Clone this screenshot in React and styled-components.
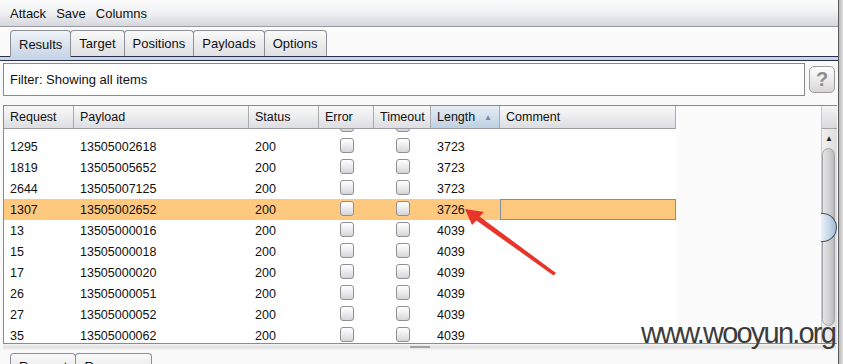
import React from 'react'
import styled, { createGlobalStyle } from 'styled-components'

const GlobalStyle = createGlobalStyle`
  html, body {
    margin: 0;
    padding: 0;
  }
  body {
    font-family: 'Liberation Sans', Arial, sans-serif;
    background: #f9f9f9;
    color: #000;
    overflow: hidden;
  }
`

const Root = styled.div`
  position: relative;
  display: flex;
  width: 843px;
  height: 364px;
  overflow: hidden;
`

const Window = styled.div`
  width: 838px;
  display: flex;
  flex-direction: column;
  overflow: hidden;
  background: #f9f9f9;
`

const Edge = styled.div`
  flex: 1;
  border-left: 1px solid #5c5c5c;
  background: linear-gradient(to right, #b9b9b9, #dedede);
`

const MenuBar = styled.div`
  flex-shrink: 0;
  height: 26px;
  display: flex;
  align-items: center;
  gap: 10px;
  padding-left: 10px;
  border-bottom: 1px solid #9a9ba1;
  background: linear-gradient(#fbfbfc, #f1f2f4 45%, #d5d7de);
  font-size: 13px;
  color: #111;
`

const TabStrip = styled.div`
  flex-shrink: 0;
  height: 29px;
  display: flex;
  align-items: flex-end;
  padding-left: ${p => p.$inset || 10}px;
  background: #fbfbfb;
`

const Tab = styled.div`
  position: relative;
  z-index: ${p => (p.$active ? 1 : 0)};
  flex-shrink: 0;
  height: ${p => (p.$active ? 27 : 26)}px;
  margin-bottom: ${p => (p.$active ? -1 : 0)}px;
  margin-right: -1px;
  padding: 0 8px;
  box-sizing: border-box;
  display: flex;
  align-items: center;
  font-size: 13px;
  color: #111;
  border: 1px solid #8d8f96;
  border-bottom: none;
  border-radius: 4px 4px 0 0;
  background: ${p =>
    p.$active
      ? 'linear-gradient(#eef3f8, #dbe5ef 50%, #c7d5e6)'
      : 'linear-gradient(#fafafa, #ececee 50%, #e0e1e4)'};
`

const TabRule = styled.div`
  flex-shrink: 0;
  height: 3px;
  border-top: 1px solid #27314b;
  border-bottom: 1px solid #27314b;
  background: #c7d5e6;
`

const Content = styled.div`
  flex: 1;
  min-height: 0;
  display: flex;
  flex-direction: column;
  padding: 0 2px 0 3px;
`

const FilterRow = styled.div`
  flex-shrink: 0;
  display: flex;
  align-items: center;
  gap: 4px;
  margin-top: 2px;
  padding-right: 1px;
`

const FilterBox = styled.div`
  flex: 1;
  height: 33px;
  box-sizing: border-box;
  display: flex;
  align-items: center;
  padding-left: 6px;
  border: 1px solid #8a8a8a;
  background: #fefefe;
  font-size: 13px;
  color: #111;
`

const HelpButton = styled.div`
  width: 26px;
  height: 27px;
  box-sizing: border-box;
  display: flex;
  align-items: center;
  justify-content: center;
  border: 1px solid #9c9c9c;
  border-radius: 5px;
  background: linear-gradient(#fdfdfd, #e9e9e9 55%, #d6d6d6);
  font-size: 20px;
  font-weight: bold;
  color: #8e8e8e;
`

const TableFrame = styled.div`
  flex-shrink: 0;
  display: flex;
  margin-top: 9px;
  margin-right: -1px;
  border: 1px solid #8b8b8b;
  border-right: none;
`

const TableMain = styled.div`
  flex: 1;
  display: flex;
  flex-direction: column;
  background: #fbfbfb;
`

const HeaderRow = styled.div`
  display: flex;
  height: 23px;
`

const HeaderCell = styled.div`
  width: ${p => p.$w}px;
  box-sizing: border-box;
  display: flex;
  align-items: center;
  justify-content: space-between;
  padding: 0 7px 0 6px;
  border-right: 1px solid #a9abb0;
  border-bottom: 1px solid #9a9ca2;
  font-size: 12.5px;
  color: #111;
  background: ${p =>
    p.$sorted
      ? 'linear-gradient(#e4ecf4, #d3dfeb 50%, #bfd0e2)'
      : 'linear-gradient(#f8f8f9, #ececee 50%, #dcdde2)'};
`

const SortArrow = styled.span`
  font-size: 8px;
  color: #6a89b0;
`

const Body = styled.div`
  height: 214px;
  overflow: hidden;
`

const Rows = styled.div`
  margin-top: -14px;
`

const Row = styled.div`
  display: flex;
  width: 672px;
  height: 21px;
  background: ${p => (p.$hi ? '#fec87f' : '#ffffff')};
`

const Cell = styled.div`
  width: ${p => p.$w}px;
  box-sizing: border-box;
  display: flex;
  align-items: center;
  justify-content: ${p => (p.$center ? 'center' : 'flex-start')};
  padding-left: ${p => (p.$center ? 0 : 6)}px;
  font-size: 12.5px;
  color: #111;
  border: ${p => (p.$editing ? '1px solid #7e8fa3' : 'none')};
`

const CheckBox = styled.span`
  width: 14px;
  height: 15px;
  box-sizing: border-box;
  margin-top: -2px;
  border: 1px solid #8e9096;
  border-radius: 3px;
  background: linear-gradient(#ffffff, #ececec 50%, #d4d5d8);
`

const ScrollBar = styled.div`
  width: 16px;
  display: flex;
  flex-direction: column;
`

const Corner = styled.div`
  height: 23px;
  box-sizing: border-box;
  border-left: 1px solid #c8c8c8;
  border-bottom: 1px solid #a4a4a4;
  background: linear-gradient(#f3f3f3, #d9dadd);
`

const Track = styled.div`
  position: relative;
  flex: 1;
  display: flex;
  flex-direction: column;
  align-items: flex-start;
  padding-top: 2px;
  border-left: 1px solid #c8c8c8;
  background: linear-gradient(to right, #f0f0f0, #dedede);
`

const UpArrow = styled.div`
  width: 14px;
  height: 14px;
  display: flex;
  align-items: center;
  justify-content: center;
  font-size: 8px;
  color: #222;
`

const Thumb = styled.div`
  width: 13px;
  height: 178px;
  margin-top: 3px;
  box-sizing: border-box;
  border: 1px solid #a2a4a9;
  border-radius: 7px;
  background: linear-gradient(to right, #e6e6e6, #cfcfcf 60%, #b9b9b9);
`

const Knob = styled.div`
  position: absolute;
  top: 84px;
  left: -1px;
  width: 16px;
  height: 29px;
  box-sizing: border-box;
  border: 1px solid #46525f;
  border-left: none;
  border-radius: 0 15px 15px 0;
  background: linear-gradient(to right, #eaf1f8, #c3d5e7 60%, #9fb8d2);
`

const Splitter = styled.div`
  flex-shrink: 0;
  height: 6px;
  display: flex;
  align-items: center;
  justify-content: center;
  background: linear-gradient(#f6f6f6, #e0e0e0 50%, #f6f6f6);
`

const Grip = styled.div`
  width: 20px;
  height: 2px;
  background: #a2a2a2;
`

const BottomTabs = styled(TabStrip)`
  height: 24px;
  margin-top: 3px;
  background: transparent;
  align-items: flex-start;
`

const Watermark = styled.div`
  position: absolute;
  right: 8px;
  top: 319px;
  font-size: 29px;
  line-height: 29px;
  letter-spacing: -1.8px;
  color: #3c3c3c;
`

const Overlay = styled.svg`
  position: absolute;
  left: 0;
  top: 0;
  pointer-events: none;
`

const columns = [
  { key: 'req', title: 'Request', w: 70 },
  { key: 'pay', title: 'Payload', w: 175 },
  { key: 'status', title: 'Status', w: 70 },
  { key: 'err', title: 'Error', w: 55, check: true },
  { key: 'timeout', title: 'Timeout', w: 57, check: true },
  { key: 'len', title: 'Length', w: 69, sorted: true },
  { key: 'comment', title: 'Comment', w: 176 }
]

const rows = [
  { req: '', pay: '', status: '', len: '' },
  { req: '1295', pay: '13505002618', status: '200', len: '3723' },
  { req: '1819', pay: '13505005652', status: '200', len: '3723' },
  { req: '2644', pay: '13505007125', status: '200', len: '3723' },
  { req: '1307', pay: '13505002652', status: '200', len: '3726', hi: true },
  { req: '13', pay: '13505000016', status: '200', len: '4039' },
  { req: '15', pay: '13505000018', status: '200', len: '4039' },
  { req: '17', pay: '13505000020', status: '200', len: '4039' },
  { req: '26', pay: '13505000051', status: '200', len: '4039' },
  { req: '27', pay: '13505000052', status: '200', len: '4039' },
  { req: '35', pay: '13505000062', status: '200', len: '4039' }
]

const tabs = ['Results', 'Target', 'Positions', 'Payloads', 'Options']

export default function App () {
  return (
    <Root>
      <GlobalStyle />
      <Window>
        <MenuBar>
          <span>Attack</span>
          <span>Save</span>
          <span>Columns</span>
        </MenuBar>
        <TabStrip>
          {tabs.map((t, i) => (
            <Tab key={t} $active={i === 0}>{t}</Tab>
          ))}
        </TabStrip>
        <TabRule />
        <Content>
          <FilterRow>
            <FilterBox>Filter: Showing all items</FilterBox>
            <HelpButton>?</HelpButton>
          </FilterRow>
          <TableFrame>
            <TableMain>
              <HeaderRow>
                {columns.map(c => (
                  <HeaderCell key={c.key} $w={c.w} $sorted={c.sorted}>
                    {c.title}
                    {c.sorted && <SortArrow>▲</SortArrow>}
                  </HeaderCell>
                ))}
              </HeaderRow>
              <Body>
                <Rows>
                  {rows.map((r, i) => (
                    <Row key={i} $hi={r.hi}>
                      {columns.map(c => (
                        <Cell
                          key={c.key}
                          $w={c.w}
                          $center={c.check}
                          $editing={r.hi && c.key === 'comment'}
                        >
                          {c.check ? <CheckBox /> : r[c.key]}
                        </Cell>
                      ))}
                    </Row>
                  ))}
                </Rows>
              </Body>
            </TableMain>
            <ScrollBar>
              <Corner />
              <Track>
                <UpArrow>▲</UpArrow>
                <Thumb />
                <Knob />
              </Track>
            </ScrollBar>
          </TableFrame>
          <Splitter>
            <Grip />
          </Splitter>
          <BottomTabs $inset={7}>
            <Tab>Request</Tab>
            <Tab>Response</Tab>
          </BottomTabs>
        </Content>
      </Window>
      <Edge />
      <Watermark>www.wooyun.org</Watermark>
      <Overlay width='843' height='364' viewBox='0 0 843 364'>
        <polygon
          points='465,209 484,212 479.5,216.5 556,273 553.5,275.5 476.5,220.5 472,225'
          fill='#e8352a'
        />
      </Overlay>
    </Root>
  )
}
